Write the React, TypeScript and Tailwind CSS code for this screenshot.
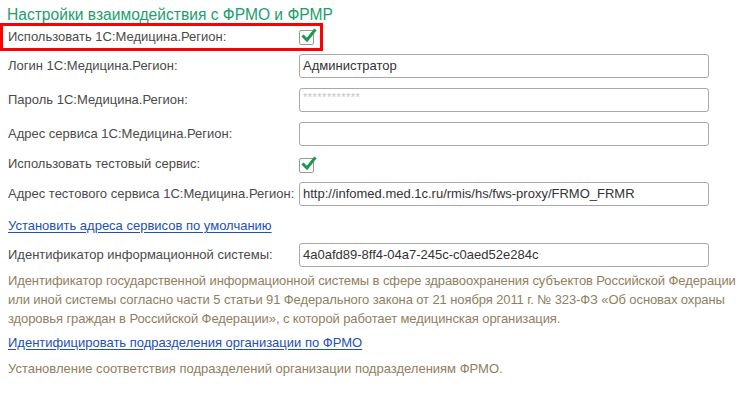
import React from 'react';

const Check: React.FC<{ className?: string }> = ({ className }) => (
  <div className={`relative w-[15px] h-[15px] border border-[#9a9a9a] rounded-[2px] bg-white ${className ?? ''}`}>
    <svg className="absolute left-[1px] top-[-3px]" width="16" height="16" viewBox="0 0 16 16">
      <path d="M2.5 8.5 L6 12 L13.5 2.5" fill="none" stroke="#1b9a4b" strokeWidth="3" strokeLinecap="square" />
    </svg>
  </div>
);

const Field: React.FC<{ value?: string; password?: boolean }> = ({ value, password }) => (
  <div className="w-[410px] h-[24px] border border-[#a8a8a8] rounded-[3px] bg-white flex items-center pl-[3px] text-[13px] text-[#333]">
    {password ? (
      <span className="text-[#c4c4c4] text-[11px] leading-none -mt-[6px] tracking-[0.5px]">************</span>
    ) : (
      value
    )}
  </div>
);

const Row: React.FC<{ label: string; children: React.ReactNode; className?: string }> = ({ label, children, className }) => (
  <div className={`flex items-center ${className ?? ''}`}>
    <div className="w-[291px] text-[13px] text-[#4a4a4a]">{label}</div>
    {children}
  </div>
);

export default function App() {
  return (
    <div
      className="w-[746px] h-[394px] bg-white overflow-hidden"
      style={{ fontFamily: '"Liberation Sans", Arial, sans-serif' }}
    >
      <div className="pt-[6px] pl-[7px] text-[15.6px] leading-[18px] text-[#1e9d6c]">
        Настройки взаимодействия с ФРМО и ФРМР
      </div>

      <div className="w-[323px] h-[28px] border-[3px] border-[#ff0000] flex items-center pl-[5px] -mt-[1px]">
        <div className="w-[291px] text-[13px] text-[#4a4a4a]">Использовать 1С:Медицина.Регион:</div>
        <Check />
      </div>

      <div className="pl-[8px]">
        <Row label="Логин 1С:Медицина.Регион:" className="mt-[3px]">
          <Field value="Администратор" />
        </Row>
        <Row label="Пароль 1С:Медицина.Регион:" className="mt-[10px]">
          <Field password />
        </Row>
        <Row label="Адрес сервиса 1С:Медицина.Регион:" className="mt-[10px]">
          <Field />
        </Row>
        <Row label="Использовать тестовый сервис:" className="mt-[10px] h-[16px]">
          <Check className="mt-[2px]" />
        </Row>
        <Row label="Адрес тестового сервиса 1С:Медицина.Регион:" className="mt-[10px]">
          <Field value="http://infomed.med.1c.ru/rmis/hs/fws-proxy/FRMO_FRMR" />
        </Row>

        <div className="mt-[11px] h-[18px] leading-[18px] text-[13px]">
          <a className="text-[#2350b0] underline underline-offset-2">Установить адреса сервисов по умолчанию</a>
        </div>

        <Row label="Идентификатор информационной системы:" className="mt-[8px]">
          <Field value="4a0afd89-8ff4-04a7-245c-c0aed52e284c" />
        </Row>

        <div className="mt-[4px] text-[13px] leading-[19px] text-[#8f805f] whitespace-nowrap tracking-[-0.1px]">
          Идентификатор государственной информационной системы в сфере здравоохранения субъектов Российской Федерации
          <br />
          или иной системы согласно части 5 статьи 91 Федерального закона от 21 ноября 2011 г. № 323-ФЗ «Об основах охраны
          <br />
          здоровья граждан в Российской Федерации», с которой работает медицинская организация.
        </div>

        <div className="mt-[6px] h-[18px] leading-[18px] text-[13px]">
          <a className="text-[#2350b0] underline underline-offset-2">Идентифицировать подразделения организации по ФРМО</a>
        </div>

        <div className="mt-[8px] text-[13px] leading-[18px] text-[#8f805f]">
          Установление соответствия подразделений организации подразделениям ФРМО.
        </div>
      </div>
    </div>
  );
}
